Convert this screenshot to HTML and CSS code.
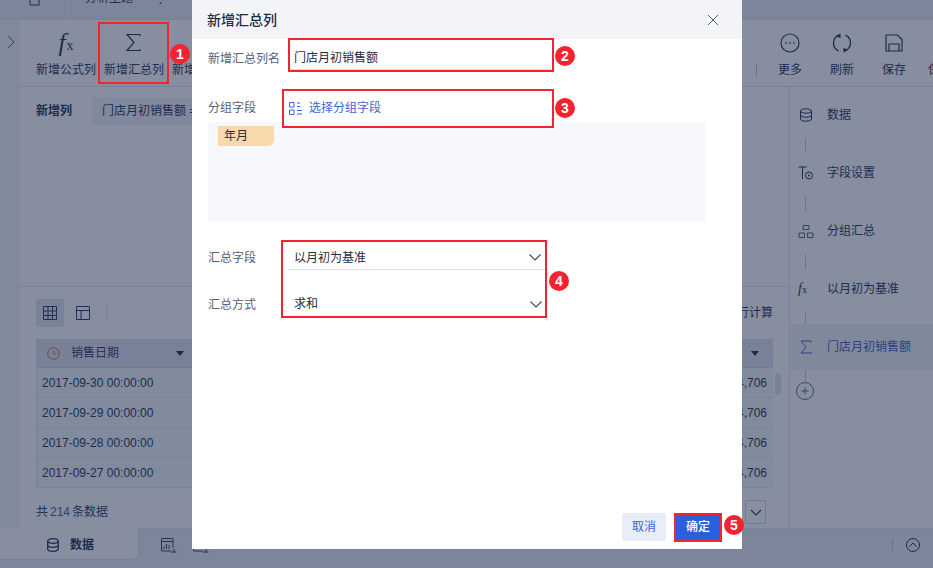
FILE: index.html
```html
<!DOCTYPE html>
<html lang="zh">
<head>
<meta charset="utf-8">
<title>新增汇总列</title>
<link rel="stylesheet" href="styles.css">
</head>
<body>
<div class="app">
  <header class="topbar">
    <svg class="back-icon" width="14" height="6" viewBox="0 0 14 6"><path d="M4 0v5h9V0" fill="none" stroke="currentColor"/></svg>
    <span class="topbar-sep"></span>
    <span class="topbar-title">分析主题</span>
    <span class="topbar-dot">·</span>
  </header>
  <div class="body">
    <aside class="rail">
      <svg width="8" height="14" viewBox="0 0 8 14"><path d="M1 1l6 6-6 6" fill="none" stroke="currentColor" stroke-width="1"/></svg>
    </aside>
    <div class="workspace">
      <div class="toolbar">
        <div class="tool"><span class="tool-icon fx"><i>f</i><small>x</small></span><span>新增公式列</span></div>
        <div class="tool"><span class="tool-icon"><svg width="18" height="20" viewBox="0 0 18 20"><path d="M15 3V1.500H2L9 9.500L2 17.500H15V16" fill="none" stroke="currentColor" stroke-width="1.200"/></svg></span><span>新增汇总列</span></div>
        <div class="tool"><span class="tool-icon"></span><span>新增赋值列</span></div>
        <div class="toolbar-right">
          <span class="toolbar-sep"></span>
          <div class="tool wide"><span class="tool-icon"><svg width="20" height="20" viewBox="0 0 20 20"><circle cx="10" cy="10" r="9" fill="none" stroke="currentColor" stroke-width="1.200"/><path d="M5.500 10h1.400M9.300 10h1.400M13.100 10h1.400" stroke="currentColor" stroke-width="1.400"/></svg></span><span>更多</span></div>
          <div class="tool wide"><span class="tool-icon"><svg width="20" height="20" viewBox="0 0 20 20"><path d="M6.800 2.200A8.500 8.500 0 0 0 6.500 17.800M13.200 17.800A8.500 8.500 0 0 0 13.500 2.200" fill="none" stroke="currentColor" stroke-width="1.300"/><path d="M8.500 .5v5l-4-2.500zM11.500 19.500v-5l4 2.500z" fill="currentColor"/></svg></span><span>刷新</span></div>
          <div class="tool wide"><span class="tool-icon"><svg width="18" height="18" viewBox="0 0 18 18"><path d="M1 1h11.500L17 5.500V17H1zM4 17v-7h10v7" fill="none" stroke="currentColor" stroke-width="1.200"/></svg></span><span>保存</span></div>
          <div class="tool wide"><span class="tool-icon"></span><span>保存并</span></div>
        </div>
      </div>
      <div class="content">
        <main class="editor">
          <section class="formula">
            <strong class="formula-label">新增列</strong>
            <span class="formula-chip">门店月初销售额 =</span>
          </section>
          <section class="preview">
            <div class="preview-bar">
              <span class="view-btn active"><svg width="14" height="14" viewBox="0 0 14 14"><path d="M.5.500h13v13H.500zM.5 5h13M.5 9.500h13M5 .5v13M9.500 .5v13" fill="none" stroke="currentColor"/></svg></span>
              <span class="view-btn"><svg width="14" height="14" viewBox="0 0 14 14"><path d="M.5.500h13v13H.500zM.5 4.500h13M5 4.500v9" fill="none" stroke="currentColor"/></svg></span>
              <span class="preview-sep"></span>
              <span class="preview-action">全部行计算</span>
            </div>
            <div class="table-wrap">
              <div class="table">
                <div class="table-row table-head">
                  <span class="cell-date"><svg class="clock" width="13" height="13" viewBox="0 0 13 13"><circle cx="6.500" cy="6.500" r="5.800" fill="none" stroke="currentColor"/><path d="M6.500 3.500v3.200h3" fill="none" stroke="currentColor"/></svg>销售日期<i class="caret"></i></span>
                  <span class="cell-num"><i class="caret"></i></span>
                </div>
                <div class="table-row"><span class="cell-date">2017-09-30 00:00:00</span><span class="cell-num">4,706</span></div>
                <div class="table-row"><span class="cell-date">2017-09-29 00:00:00</span><span class="cell-num">4,706</span></div>
                <div class="table-row"><span class="cell-date">2017-09-28 00:00:00</span><span class="cell-num">4,706</span></div>
                <div class="table-row"><span class="cell-date">2017-09-27 00:00:00</span><span class="cell-num">4,706</span></div>
              </div>
              <span class="scroll-thumb"></span>
            </div>
            <div class="pager">
              <span>共<b>214</b>条数据</span>
              <span class="page-select"><svg width="12" height="7" viewBox="0 0 12 7"><path d="M1 1l5 5 5-5" fill="none" stroke="currentColor" stroke-width="1.200"/></svg></span>
            </div>
          </section>
        </main>
        <aside class="steps">
          <div class="step"><svg width="14" height="14" viewBox="0 0 14 14"><ellipse cx="7" cy="3" rx="5.500" ry="2.200" fill="none" stroke="currentColor"/><path d="M1.500 3v8c0 1.200 2.500 2.200 5.500 2.200s5.500-1 5.500-2.200V3M1.500 7c0 1.200 2.500 2.200 5.500 2.200s5.500-1 5.500-2.200" fill="none" stroke="currentColor"/></svg><span>数据</span></div>
          <div class="step"><svg width="15" height="14" viewBox="0 0 15 14"><path d="M0 1h8M4 1v12" fill="none" stroke="currentColor"/><circle cx="10.500" cy="9.500" r="3.500" fill="none" stroke="currentColor"/><circle cx="10.500" cy="9.500" r="1" fill="currentColor"/></svg><span>字段设置</span></div>
          <div class="step"><svg class="soft" width="15" height="13" viewBox="0 0 15 13"><path d="M4.500.5h6v4h-6zM.5 8h5.500v4.500H.500zM9 8h5.500v4.500H9z" fill="none" stroke="currentColor"/></svg><span>分组汇总</span></div>
          <div class="step"><span class="step-fx"><i>f</i><small>x</small></span><span>以月初为基准</span></div>
          <div class="step active"><svg width="12" height="14" viewBox="0 0 12 14"><path d="M11 2.500V1H1l5 6-5 6h10v-1.500" fill="none" stroke="currentColor"/></svg><span>门店月初销售额</span></div>
          <div class="step-add"><svg width="18" height="18" viewBox="0 0 18 18"><circle cx="9" cy="9" r="8.500" fill="none" stroke="currentColor"/><path d="M5.500 9h7M9 5.500v7" stroke="currentColor"/></svg></div>
        </aside>
      </div>
    </div>
  </div>
  <footer class="tabs">
    <div class="tab active"><svg width="12" height="14" viewBox="0 0 12 14"><ellipse cx="6" cy="3" rx="5.300" ry="2.300" fill="none" stroke="currentColor" stroke-width="1.300"/><path d="M.7 3v8c0 1.300 2.400 2.300 5.300 2.300s5.300-1 5.300-2.300V3M.7 7c0 1.300 2.400 2.300 5.300 2.300s5.300-1 5.300-2.300" fill="none" stroke="currentColor" stroke-width="1.300"/></svg><span>数据</span></div>
    <div class="tab"><svg width="16" height="15" viewBox="0 0 16 15"><path d="M12 10V.500H.500V13H10M0.500 3.500H12M3 11V8M5.500 11V6M8 11V7M10 14h5.500M13 11v4" fill="none" stroke="currentColor"/></svg></div>
    <div class="tab tab-peek"><svg width="16" height="15" viewBox="0 0 16 15"><path d="M12 10V.500H.500V13H10M0.500 3.500H12M10 14h5.500M13 11v4" fill="none" stroke="currentColor"/></svg></div>
    <div class="tabs-right">
      <span class="tabs-sep"></span>
      <svg width="14" height="14" viewBox="0 0 14 14"><circle cx="7" cy="7" r="6.500" fill="none" stroke="currentColor"/><path d="M3.500 8.500L7 5l3.500 3.500" fill="none" stroke="currentColor"/></svg>
    </div>
  </footer>
</div>

<div class="mask"></div>

<div class="dialog">
  <div class="dialog-head">
    <span>新增汇总列</span>
    <svg width="12" height="12" viewBox="0 0 12 12"><path d="M1 1l10 10M11 1L1 11" stroke="currentColor" fill="none"/></svg>
  </div>
  <div class="dialog-body">
    <div class="field field-name">
      <label>新增汇总列名</label>
      <div class="input">门店月初销售额</div>
    </div>
    <div class="field field-group">
      <label>分组字段</label>
      <a class="pick">
        <svg width="13" height="13" viewBox="0 0 13 13"><path d="M.5.500h4.500v4.500H.500zM.5 8h4.500v4.500H.500zM8 1h3M8 4.500h3M8 8.500h5M8 12h5" fill="none" stroke="currentColor"/></svg>
        <span>选择分组字段</span>
      </a>
    </div>
    <div class="group-panel"><span class="tag">年月</span></div>
    <div class="field field-select first">
      <label>汇总字段</label>
      <div class="select"><span>以月初为基准</span><svg width="12" height="7" viewBox="0 0 12 7"><path d="M.5.500L6 6 11.500.500" fill="none" stroke="currentColor" stroke-width="1.100"/></svg></div>
    </div>
    <div class="field field-select second">
      <label>汇总方式</label>
      <div class="select"><span>求和</span><svg width="12" height="7" viewBox="0 0 12 7"><path d="M.5.500L6 6 11.500.500" fill="none" stroke="currentColor" stroke-width="1.100"/></svg></div>
    </div>
  </div>
  <div class="dialog-foot">
    <button class="btn">取消</button>
    <button class="btn primary">确定</button>
  </div>
</div>

<span class="mark box-1"></span><span class="num num-1">1</span>
<span class="mark box-2"></span><span class="num num-2">2</span>
<span class="mark box-3"></span><span class="num num-3">3</span>
<span class="mark box-4"></span><span class="num num-4">4</span>
<span class="mark box-5"></span><span class="num num-5">5</span>
</body>
</html>
```
FILE: styles.css
```css
* { box-sizing: border-box; }
html, body { margin: 0; height: 100%; overflow: hidden; }
body {
  position: relative;
  width: 933px;
  height: 568px;
  font: 12px/16px "Liberation Sans", "Noto Sans CJK SC", sans-serif;
  color: #17264a;
}
svg { display: block; flex: none; }
i, small { font-style: normal; }

/* background application */
.app { display: flex; flex-direction: column; height: 568px; background: #e9ebf1; }
.topbar {
  flex: none; height: 20px; display: flex; align-items: flex-start; overflow: hidden;
  background: #e9ebf1; border-bottom: 1px solid #e0e3ea;
}
.back-icon { margin-left: 26px; }
.topbar-sep { width: 1px; height: 20px; margin-left: 24px; background: #dfe2e9; }
.topbar-title { margin: -10px 0 0 20px; }
.topbar-dot { margin: -6px 0 0 25px; font-size: 14px; }

.body { flex: 1; min-height: 0; display: flex; }
.rail { flex: none; width: 20px; padding: 15px 0 0 7px; background: #f4f5f8; color: #3e4a66; }
.workspace { flex: 1; min-width: 0; display: flex; flex-direction: column; background: #fff; }

.toolbar {
  flex: none; height: 67px; display: flex; padding-left: 12px; overflow: hidden;
  border-bottom: 1px solid #dfe2e9;
}
.tool { flex: none; width: 68px; display: flex; flex-direction: column; align-items: center; }
.tool.wide { width: 52px; }
.tool-icon { height: 42px; display: flex; align-items: center; justify-content: center; padding-top: 3px; }
.fx { font-family: "Liberation Serif", serif; font-size: 25px; }
.fx i { font-style: italic; }
.fx small { font-size: 14px; margin: 6px 0 0 1px; }
.toolbar-right { margin-left: auto; display: flex; align-items: flex-start; margin-right: -39px; }
.toolbar-sep { width: 1px; height: 12px; margin: 45px 7px 0 0; background: #b8bdca; }

.content { flex: 1; min-height: 0; display: flex; }
.editor { flex: 1; min-width: 0; display: flex; flex-direction: column; padding: 0 0 0 8px; }
.formula { flex: none; height: 200px; padding: 10px 0 0; display: flex; align-items: flex-start; border-bottom: 1px solid #dfe2e9; margin-left: -8px; padding-left: 16px; }
.formula-label { width: 56px; line-height: 28px; font-weight: 700; }
.formula-chip { width: 100px; height: 28px; padding-left: 10px; line-height: 28px; background: #f2f3f7; white-space: nowrap; }

.preview { flex: 1; min-height: 0; display: flex; flex-direction: column; padding: 12px 16px 0 8px; }
.preview-bar { flex: none; height: 28px; display: flex; align-items: center; }
.view-btn { width: 28px; height: 28px; margin-right: 5px; display: flex; align-items: center; justify-content: center; border-radius: 2px; color: #1d2d55; }
.view-btn.active { background: #e3e6ee; }
.preview-sep { width: 1px; height: 18px; margin-left: 4px; background: #e3e6ec; }
.preview-action { margin-left: auto; }
.table-wrap { flex: none; position: relative; margin-top: 12px; }
.table { border-left: 1px solid #e3e6ec; }
.table-row { height: 30px; display: flex; justify-content: space-between; align-items: center; border-bottom: 1px solid #e3e6ec; background: #f5f6f9; }
.table-head { height: 29px; background: #dfe2ea; border-bottom: 1px solid #cdd1dc; }
.cell-date { display: flex; align-items: center; padding-left: 5px; }
.table-head .cell-date { width: 147px; color: #1d2d55; }
.clock { margin: 0 11px 0 5px; color: #c06a24; }
.caret { width: 0; height: 0; margin-left: auto; border: 4px solid transparent; border-top: 5px solid #101e45; border-bottom: 0; }
.cell-num { padding-right: 6px; }
.table-head .cell-num { display: flex; padding-right: 14px; }
.scroll-thumb { position: absolute; right: -8px; top: 34px; width: 6px; height: 22px; border-radius: 3px; background: #dfe2ea; }
.pager { flex: none; height: 24px; margin-top: 12px; display: flex; justify-content: space-between; align-items: center; color: #24345a; }
.pager b { margin: 0 2px; font-weight: 400; color: #2f55b8; }
.page-select { width: 21px; height: 24px; margin-right: 7px; display: flex; align-items: center; justify-content: center; border: 1px solid #cfd3dd; border-radius: 2px; }

.steps { flex: none; width: 144px; padding-top: 5px; border-left: 1px solid #dfe2e9; }
.step { position: relative; height: 46px; margin-bottom: 12px; padding-left: 8px; display: flex; align-items: center; }
.step > svg, .step-fx { width: 16px; margin-right: 13px; }
.step > svg.soft { color: #4c586f; }
.step::after { content: ""; position: absolute; left: 15px; top: 46px; width: 1px; height: 15px; background: #c4c8d4; }
.step:nth-child(4)::after { height: 12px; }
.step.active::after { height: 14px; }
.step.active { background: #f1f3f7; color: #2f55b8; }
.step-fx { font-family: "Liberation Serif", serif; font-size: 14px; }
.step-fx i { font-style: italic; }
.step-fx small { font-size: 10px; }
.step-add { margin: 1px 0 0 6px; color: #5a6478; }

.tabs { flex: none; height: 40px; display: flex; background: #e9ebf1; border-top: 1px solid #dfe2e9; }
.tab { height: 31px; display: flex; align-items: center; justify-content: center; gap: 11px; padding-top: 2px; }
.tab.active { width: 139px; height: 32px; margin-top: -1px; padding-left: 47px; justify-content: flex-start; background: #fff; border-radius: 0 0 6px 0; font-weight: 700; border: 1px solid #dfe2e9; border-top: 0; border-left: 0; }
.tab:not(.active) { width: 60px; color: #2d3f62; }
.tab.tab-peek { width: 32px; margin-left: -14px; }
.tabs-right { margin-left: auto; height: 32px; display: flex; align-items: center; padding-right: 13px; }
.tabs-sep { width: 1px; height: 12px; margin-right: 13px; background: #b8bdca; }

.mask { position: absolute; inset: 0; background: rgba(34, 50, 82, .55); }

/* dialog */
.dialog {
  position: absolute; left: 192px; top: 0; width: 550px; height: 549px;
  display: flex; flex-direction: column; background: #fff; color: #56607a;
}
.dialog-head {
  flex: none; height: 39px; padding: 0 23px 0 15px; display: flex; align-items: center; justify-content: space-between;
  background: #f3f4f8; font-size: 14px; font-weight: 500; color: #222d45;
}
.dialog-head svg { color: #4f6078; }
.dialog-body { flex: 1; padding: 0 16px; }
.field { display: flex; align-items: center; }
.field label { width: 80px; flex: none; }
.field-name { margin-top: 4px; height: 26px; padding-top: 6px; }
.input { width: 263px; height: 26px; margin: -4px 0 0 3px; padding: 2px 0 0 3px; display: flex; align-items: center; color: #222d45; border-bottom: 1px solid #dadde8; }
.field-group { margin-top: 28px; height: 20px; padding-top: 2px; }
.pick { display: flex; align-items: center; gap: 7px; color: #3f63d6; margin-left: 1px; }
.group-panel { height: 100px; margin-top: 5px; width: 498px; background: #f7f8fc; padding: 4px 10px; }
.tag { display: block; width: 56px; height: 20px; padding-left: 6px; line-height: 20px; color: #222d45; background: #f9d9ac; border-radius: 0 0 6px 0; }
.field-select { height: 24px; }
.field-select.first { margin-top: 24px; }
.field-select.second { margin-top: 22px; padding-top: 1px; }
.select { width: 260px; height: 24px; padding: 0 7px 0 6px; display: flex; align-items: center; justify-content: space-between; color: #222d45; border-bottom: 1px solid #dadde8; }
.select svg { color: #3a4a68; }
.field-select.second .select { padding-right: 6px; }
.dialog-foot { flex: none; height: 36px; padding-right: 20px; display: flex; justify-content: flex-end; gap: 8px; }
.btn { height: 28px; padding: 0; border: 0; border-radius: 2px; font: inherit; background: #e8edf9; color: #3f63d6; width: 44px; }
.btn.primary { width: 48px; background: #2b60dc; color: #fff; font-weight: 500; }

/* annotations */
.mark { position: absolute; border: 2px solid #f5222f; pointer-events: none; }
.box-1 { left: 98px; top: 22px; width: 71px; height: 62px; }
.box-2 { left: 288px; top: 38px; width: 266px; height: 34px; }
.box-3 { left: 282px; top: 89px; width: 272px; height: 39px; }
.box-4 { left: 281px; top: 240px; width: 266px; height: 78px; }
.box-5 { left: 674px; top: 513px; width: 48px; height: 29px; }
.num {
  position: absolute; width: 20px; height: 20px; border-radius: 50%; background: #f5222f; color: #fff;
  font: 700 14px/20px "Liberation Sans", sans-serif; text-align: center;
}
.num-1 { left: 170px; top: 44px; }
.num-2 { left: 555px; top: 46px; }
.num-3 { left: 555px; top: 98px; }
.num-4 { left: 549px; top: 271px; }
.num-5 { left: 724px; top: 515px; }
```
